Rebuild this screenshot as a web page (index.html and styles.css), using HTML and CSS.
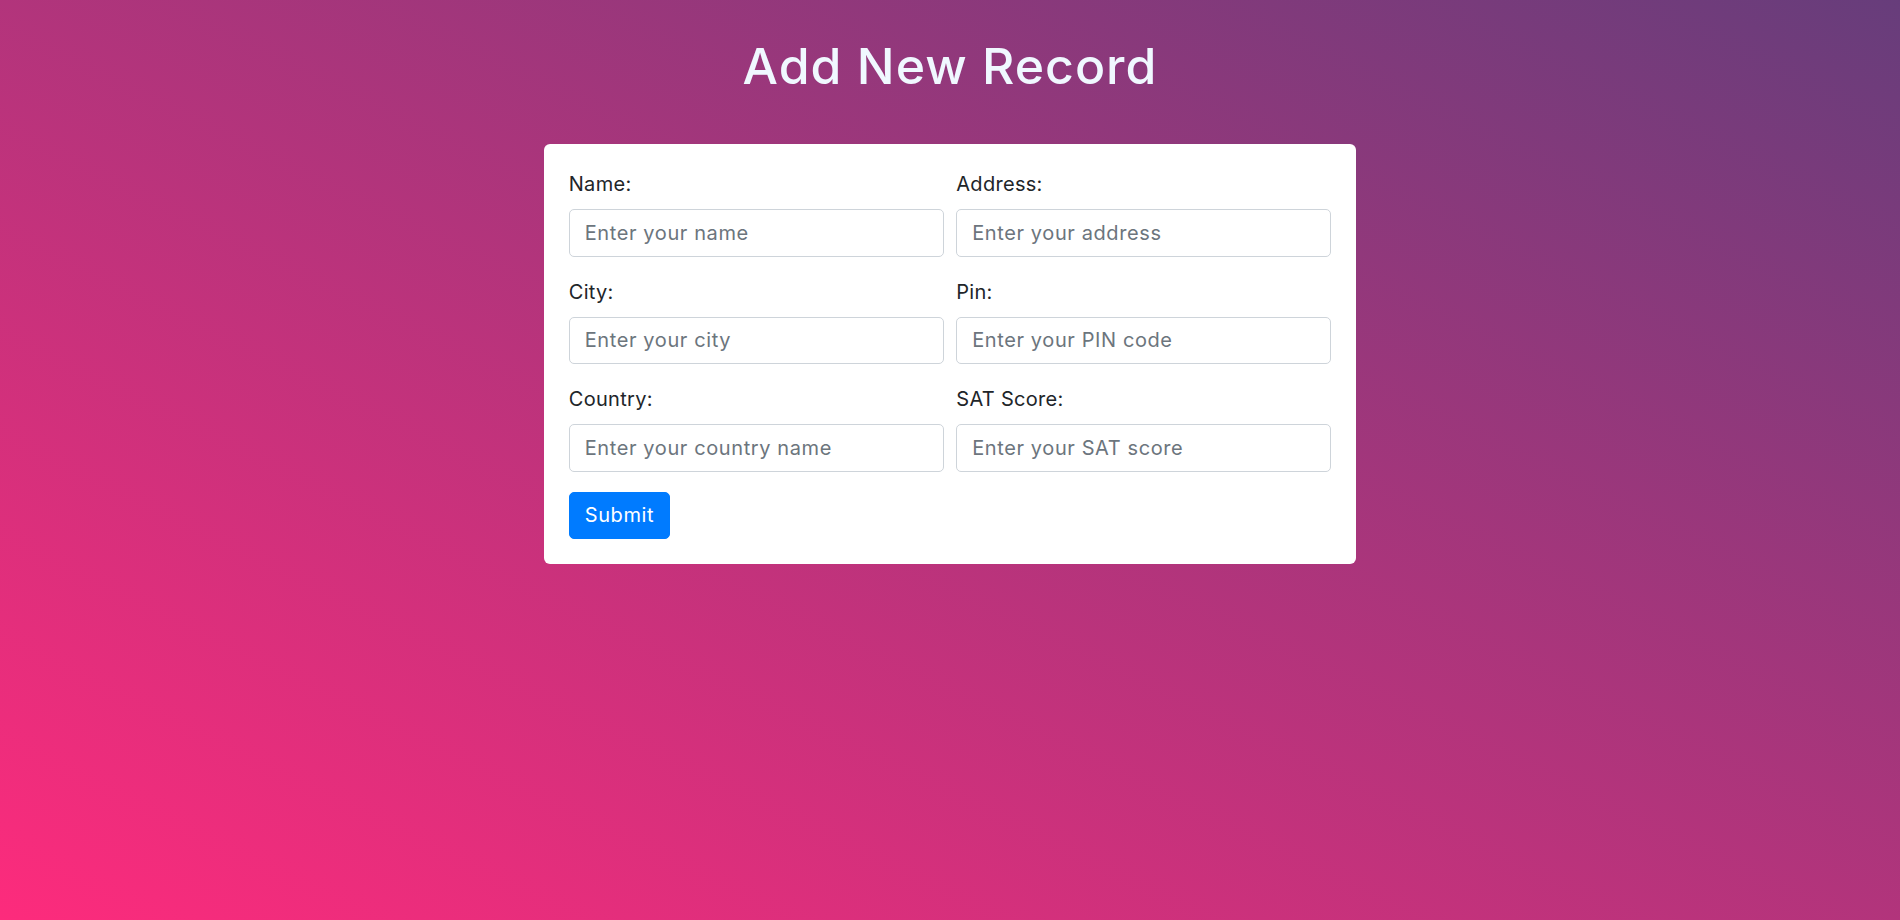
FILE: index.html
```html
<!DOCTYPE html>
<html lang="en">
<head>
<meta charset="utf-8">
<title>Add New Record</title>
<link rel="stylesheet" href="styles.css">
</head>
<body>
<main class="page">
  <h1 class="title">Add New Record</h1>
  <form class="card">
    <div class="grid">
      <div class="field">
        <label for="name">Name:</label>
        <input id="name" type="text" placeholder="Enter your name">
      </div>
      <div class="field">
        <label for="address">Address:</label>
        <input id="address" type="text" placeholder="Enter your address">
      </div>
      <div class="field">
        <label for="city">City:</label>
        <input id="city" type="text" placeholder="Enter your city">
      </div>
      <div class="field">
        <label for="pin">Pin:</label>
        <input id="pin" type="text" placeholder="Enter your PIN code">
      </div>
      <div class="field">
        <label for="country">Country:</label>
        <input id="country" type="text" placeholder="Enter your country name">
      </div>
      <div class="field">
        <label for="sat">SAT Score:</label>
        <input id="sat" type="text" placeholder="Enter your SAT score">
      </div>
    </div>
    <button type="submit" class="btn">Submit</button>
  </form>
</main>
</body>
</html>
```

FILE: styles.css
```css
* { box-sizing: border-box; }
html, body { height: 100%; }
body {
  margin: 0;
  font-family: Inter, "Open Sans", sans-serif;
  color: #212529;
  background: linear-gradient(to top right, #fd2b7c, #673d7b);
  min-height: 920px;
}
.page {
  display: flex;
  flex-direction: column;
  align-items: center;
  padding-top: 36px;
}
.title {
  margin: 0 0 48px;
  font-size: 50px;
  font-weight: 500;
  line-height: 60px;
  color: #f0f8ff;
  letter-spacing: 1px;
}
.card {
  width: 812.5px;
  background: #fff;
  border-radius: 6px;
  padding: 25px;
}
.grid {
  display: grid;
  grid-template-columns: 1fr 1fr;
  column-gap: 12.5px;
}
.field {
  display: flex;
  flex-direction: column;
  margin-bottom: 20px;
}
.field label {
  font-size: 20px;
  line-height: 30px;
  margin-bottom: 10px;
  color: #212529;
  letter-spacing: 0.3px;
}
.field input {
  height: 47.5px;
  padding: 7.5px 15px;
  font: inherit;
  font-size: 20px;
  line-height: 30px;
  letter-spacing: 0.6px;
  color: #495057;
  border: 1.25px solid #ced4da;
  border-radius: 5px;
  background: #fff;
  outline: none;
}
.field input::placeholder { color: #6c757d; opacity: 1; }
.btn {
  height: 47.5px;
  padding: 7.5px 15px;
  font: inherit;
  font-size: 20px;
  line-height: 30px;
  letter-spacing: 0.6px;
  color: #fff;
  background: #007bff;
  border: 1.25px solid #007bff;
  border-radius: 5px;
}
```
